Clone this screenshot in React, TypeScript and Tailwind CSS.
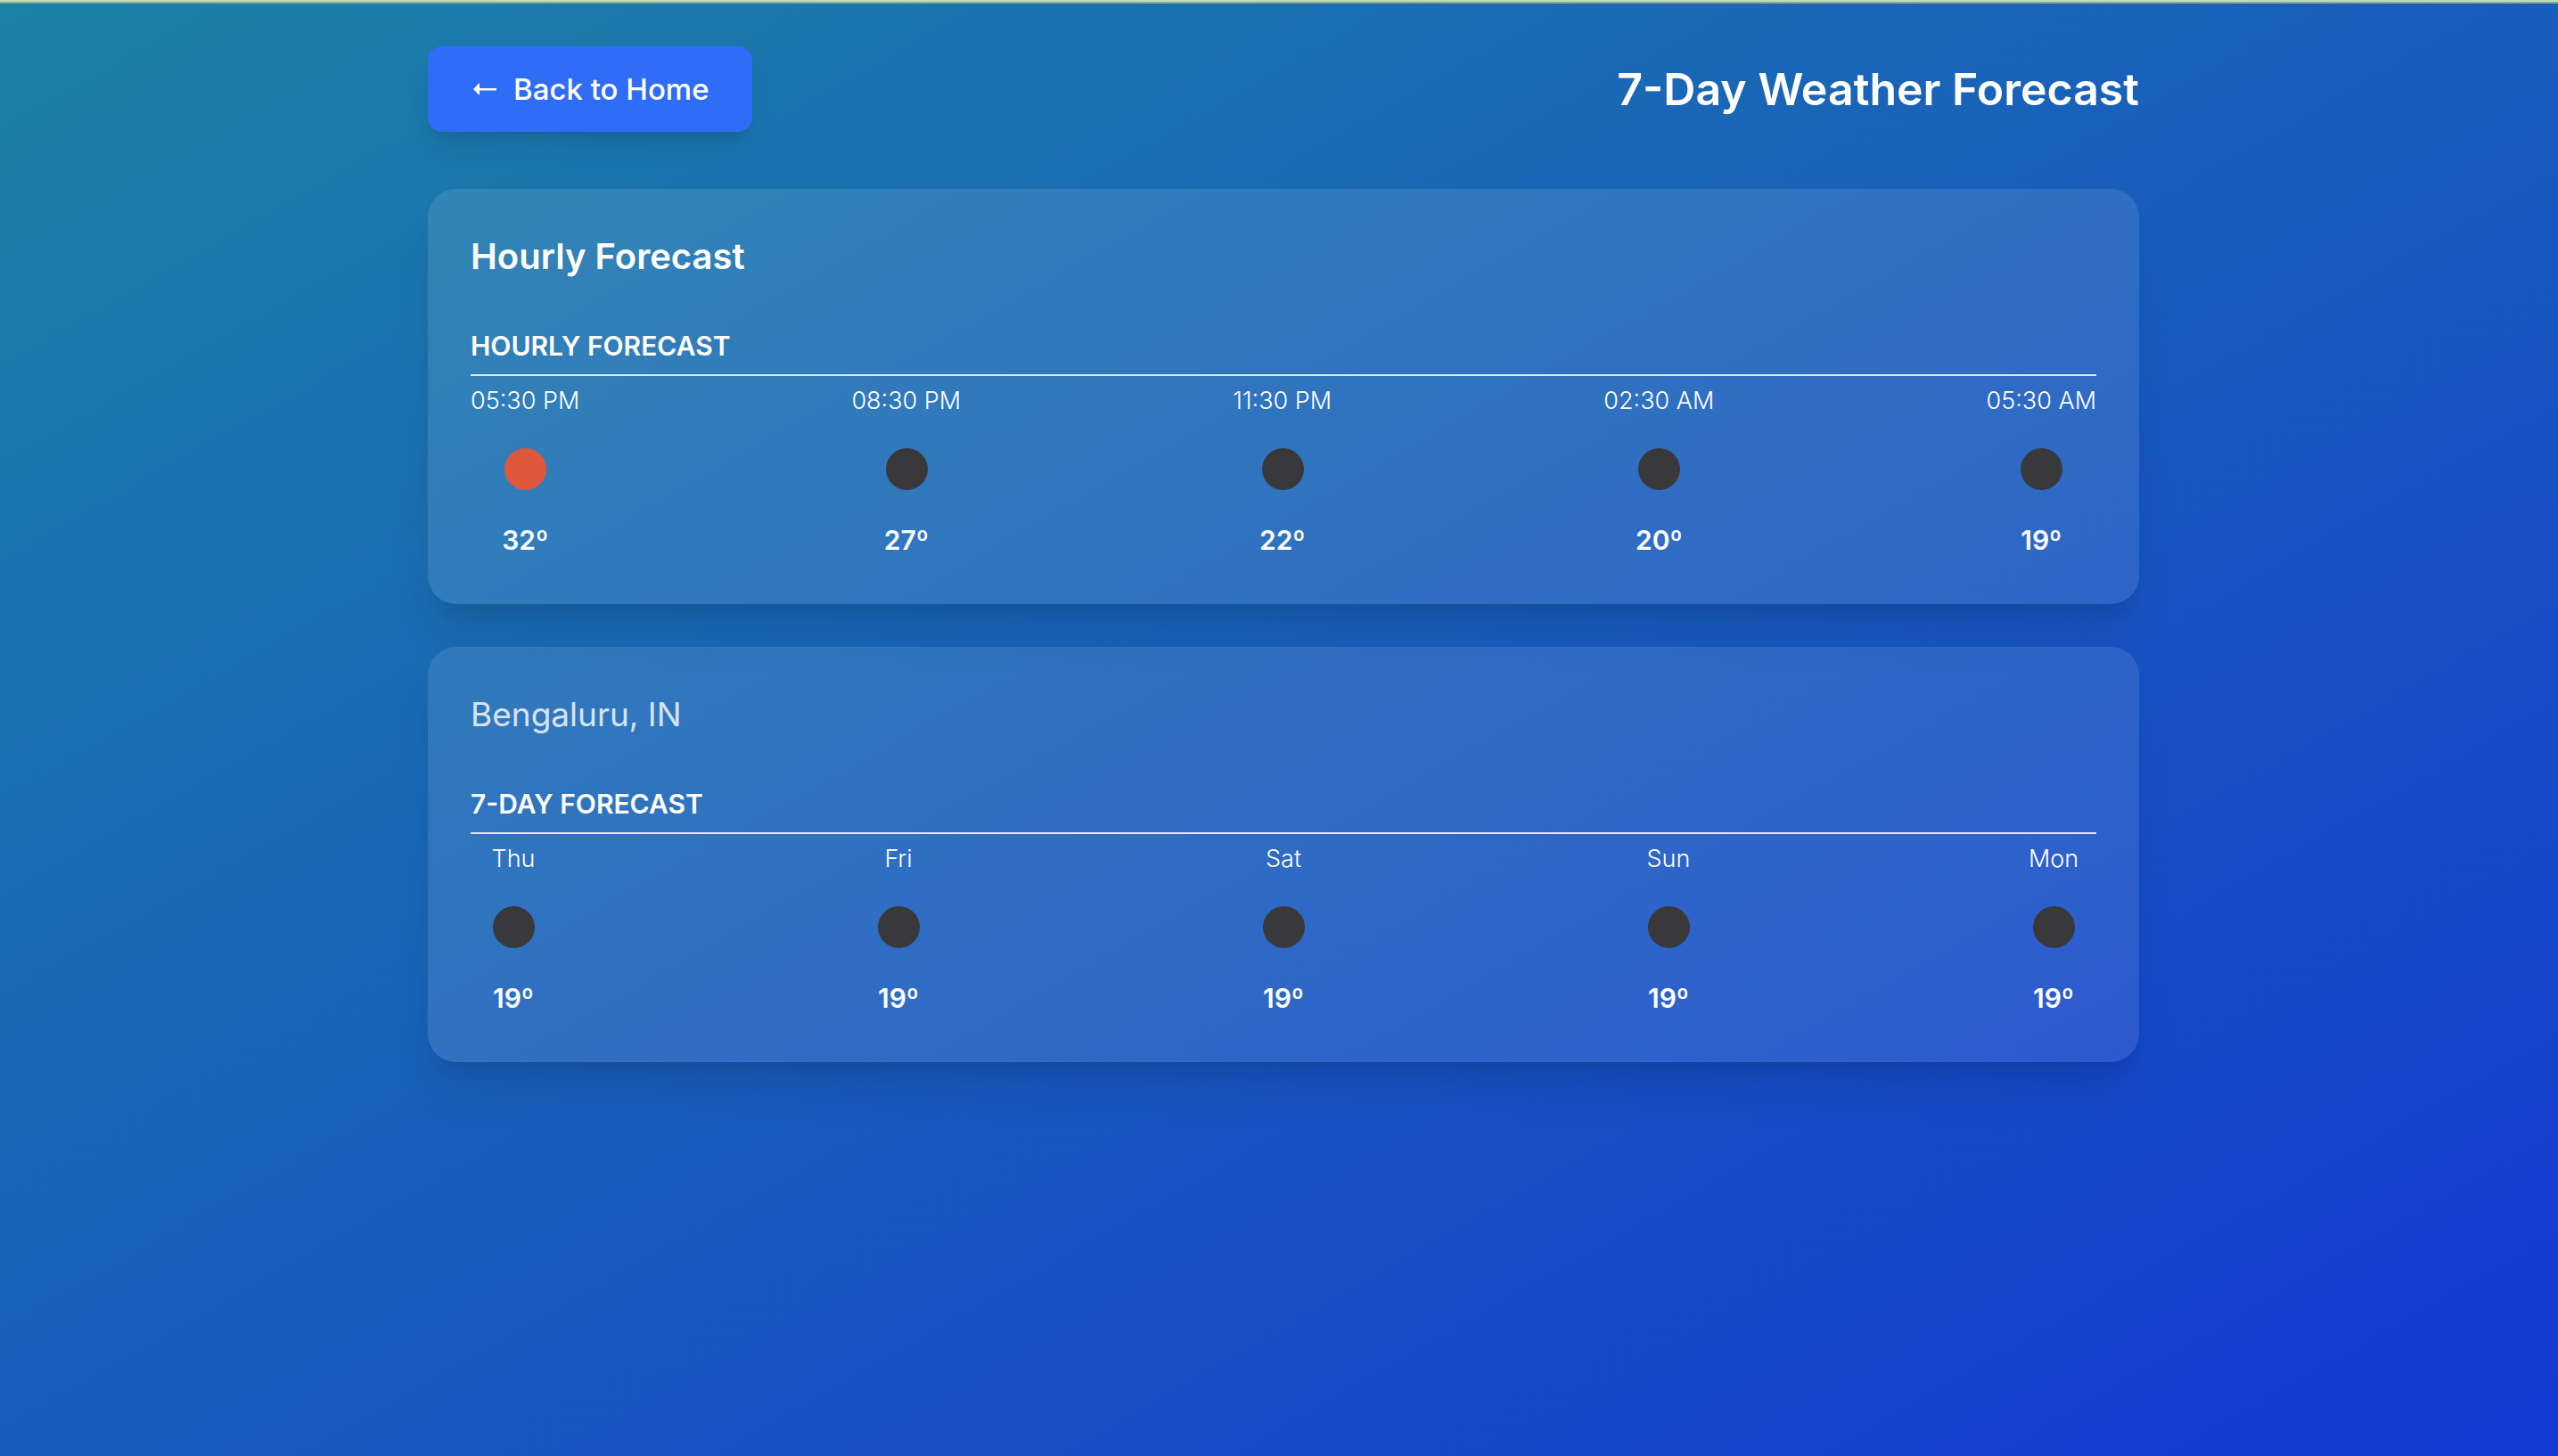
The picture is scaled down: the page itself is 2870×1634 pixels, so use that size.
import React from "react";

type Sky = "sun" | "night";

interface Entry {
  label: string;
  sky: Sky;
  temp: string;
}

const hourly: Entry[] = [
  { label: "05:30 PM", sky: "sun", temp: "32º" },
  { label: "08:30 PM", sky: "night", temp: "27º" },
  { label: "11:30 PM", sky: "night", temp: "22º" },
  { label: "02:30 AM", sky: "night", temp: "20º" },
  { label: "05:30 AM", sky: "night", temp: "19º" },
];

const daily: Entry[] = [
  { label: "Thu", sky: "night", temp: "19º" },
  { label: "Fri", sky: "night", temp: "19º" },
  { label: "Sat", sky: "night", temp: "19º" },
  { label: "Sun", sky: "night", temp: "19º" },
  { label: "Mon", sky: "night", temp: "19º" },
];

function SkyIcon({ sky }: { sky: Sky }) {
  return (
    <svg viewBox="0 0 96 96" className="my-2 size-24" role="img" aria-label={sky === "sun" ? "Clear sky" : "Clear night"}>
      <circle cx="48.500" cy="48.500" r="23.500" fill={sky === "sun" ? "#e0583b" : "#39393b"} />
    </svg>
  );
}

function Forecast({ title, entries }: { title: string; entries: Entry[] }) {
  return (
    <div className="mt-12">
      <h3 className="text-[30px] leading-[48px] font-semibold uppercase">{title}</h3>
      <hr className="mt-2 border-t-2 border-gray-200" />
      <ul className="mt-2 flex items-center justify-between">
        {entries.map((entry) => (
          <li key={entry.label} className="flex flex-col items-center">
            <p className="text-[27px] leading-10 font-light">{entry.label}</p>
            <SkyIcon sky={entry.sky} />
            <p className="text-[30px] leading-[48px] font-semibold">{entry.temp}</p>
          </li>
        ))}
      </ul>
    </div>
  );
}

function Card({ children }: { children: React.ReactNode }) {
  return (
    <section className="rounded-[32px] bg-white/10 p-12 shadow-[0_40px_50px_-10px_rgba(0,0,0,0.1),0_16px_20px_-12px_rgba(0,0,0,0.1)]">
      {children}
    </section>
  );
}

export default function App() {
  return (
    <div className="min-h-screen bg-[linear-gradient(to_bottom_right,#1c82a6,#1438d3)] font-['Inter',sans-serif] text-white">
      <div className="h-1 border-b-2 border-[#90a58c] bg-[#b9dfbd]" />
      <div className="py-12 pl-[10px]">
        <main className="mx-auto max-w-[1920px]">
          <header className="mb-16 flex items-center justify-between">
            <button
              type="button"
              className="flex h-24 items-center gap-4 rounded-2xl bg-[#2f6df6] px-12 text-[33px] leading-[48px] font-medium shadow-[0_20px_30px_-6px_rgba(0,0,0,0.1),0_8px_12px_-8px_rgba(0,0,0,0.1)]"
            >
              <svg viewBox="0 0 32 32" className="size-8" aria-hidden="true">
                <path d="M3 16 10 9V15H29V17.500H10V23Z" fill="white" />
              </svg>
              Back to Home
            </button>
            <h1 className="text-[50px] leading-[64px] font-semibold">7-Day Weather Forecast</h1>
          </header>
          <div className="flex flex-col gap-12">
            <Card>
              <h2 className="text-[40px] leading-[56px] font-semibold">Hourly Forecast</h2>
              <Forecast title="Hourly Forecast" entries={hourly} />
            </Card>
            <Card>
              <h2 className="text-[37px] leading-[56px] text-white/80">Bengaluru, IN</h2>
              <Forecast title="7-Day Forecast" entries={daily} />
            </Card>
          </div>
        </main>
      </div>
    </div>
  );
}
